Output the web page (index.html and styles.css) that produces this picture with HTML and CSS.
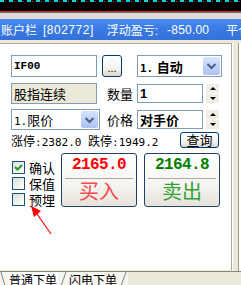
FILE: index.html
```html
<!DOCTYPE html>
<html lang="zh-CN">

<head>
    <meta charset="UTF-8">
    <meta name="viewport" content="width=device-width, initial-scale=1.0">
    <title>下单面板</title>
    <link rel="stylesheet" href="styles.css">
</head>

<body>
    <div class="chart-strip"></div>
    <div class="split"></div>

    <div class="titlebar">
        <span class="tb-name">账户栏</span>
        <span class="tb-acct">[802772]</span>
        <span class="tb-label">浮动盈亏:</span>
        <span class="tb-val">-850.00</span>
        <span class="tb-more">平仓盈亏:</span>
    </div>

    <div class="frame">
        <div class="panel">
            <div class="row row-1">
                <div class="edit code-edit">IF00</div>
                <button class="xp-btn dots-btn">...</button>
                <div class="combo mode-combo">
                    <span class="combo-val bold"><span class="mono">1.</span> 自动</span>
                    <span class="drop">
                        <svg width="17" height="18" viewBox="0 0 17 18"><path d="M4.5 7 L8.5 11 L12.5 7" fill="none" stroke="#4d6185" stroke-width="2"/></svg>
                    </span>
                </div>
            </div>

            <div class="row row-2">
                <div class="edit readonly">股指连续</div>
                <span class="lbl">数量</span>
                <div class="edit small-edit bold">1</div>
                <div class="spin"><span class="spin-up"></span><span class="spin-down"></span></div>
            </div>

            <div class="row row-3">
                <div class="combo type-combo">
                    <span class="combo-val"><span class="mono">1.</span>限价</span>
                    <span class="drop">
                        <svg width="17" height="18" viewBox="0 0 17 18"><path d="M4.5 7 L8.5 11 L12.5 7" fill="none" stroke="#4d6185" stroke-width="2"/></svg>
                    </span>
                </div>
                <span class="lbl">价格</span>
                <div class="edit small-edit bold">对手价</div>
                <div class="spin"><span class="spin-up"></span><span class="spin-down"></span></div>
            </div>

            <div class="row row-4">
                <span class="limits">涨停<span class="mono">:2382.0 </span>跌停<span class="mono">:1949.2</span></span>
                <button class="xp-btn query-btn">查询</button>
            </div>

            <div class="row row-5">
                <div class="checks">
                    <label class="chk">
                        <span class="box">
                            <svg width="11" height="11" viewBox="0 0 11 11"><path d="M2 5 L4.5 7.5 L9 3" fill="none" stroke="#21a121" stroke-width="2"/></svg>
                        </span>确认
                    </label>
                    <label class="chk"><span class="box"></span>保值</label>
                    <label class="chk"><span class="box"></span>预埋</label>
                </div>
                <button class="trade buy">
                    <span class="price">2165.0</span>
                    <span class="act">买入</span>
                </button>
                <button class="trade sell">
                    <span class="price">2164.8</span>
                    <span class="act">卖出</span>
                </button>
            </div>

            <!-- red annotation arrow drawn over the panel -->
            <svg class="arrow" width="232" height="227" viewBox="0 0 232 227">
                <line x1="51" y1="190" x2="37" y2="170" stroke="#ff0000" stroke-width="1.2"/>
                <polygon points="31,162 41,167 34,173" fill="#ff0000"/>
            </svg>
        </div>
        <div class="side"></div>
    </div>

    <div class="tabs">
        <div class="tab-set">
            <svg class="slash" width="8" height="14" viewBox="0 0 8 14"><line x1="1" y1="0" x2="5" y2="14" stroke="#808080"/></svg>
            <span class="tab active">普通下单</span>
            <svg class="slash" width="10" height="14" viewBox="0 0 10 14"><line x1="8" y1="0" x2="3" y2="14" stroke="#808080"/></svg>
            <span class="tab">闪电下单</span>
            <svg class="slash" width="10" height="14" viewBox="0 0 10 14"><line x1="8" y1="0" x2="3" y2="14" stroke="#808080"/></svg>
        </div>
    </div>
</body>

</html>
```

FILE: styles.css
```css
body {
    margin: 0;
    width: 241px;
    height: 285px;
    overflow: hidden;
    background: #ece9d8;
    font-family: "Liberation Sans", "Noto Sans CJK SC", sans-serif;
    font-size: 13px;
    color: #000;
}

.mono {
    font-family: "DejaVu Sans Mono", monospace;
}

.bold {
    font-weight: bold;
}

/* top of the chart window above */
.chart-strip {
    height: 11px;
    background-color: #000;
    background-image:
        repeating-linear-gradient(90deg, transparent 0 5px, #ff2020 5px 6px, transparent 6px 9px),
        repeating-linear-gradient(90deg, #00d8e0 0 4px, transparent 4px 9px);
    background-size: 100% 1px, 100% 2px;
    background-position: 0 1px, 0 0;
    background-repeat: no-repeat;
}

.split {
    height: 7px;
    border-top: 1px solid #e8141c;
    background: #dcdad2;
    box-shadow: inset 0 1px 0 #6f6f6f;
}

.titlebar {
    display: flex;
    align-items: center;
    height: 21px;
    padding-left: 1px;
    background: linear-gradient(#4a8cf0, #3a7be4 45%, #3471da);
    color: #fff;
    font-size: 12px;
    white-space: nowrap;
    overflow: hidden;
}

.titlebar span {
    flex-shrink: 0;
}

.tb-acct {
    margin-left: 6px;
    letter-spacing: 0.5px;
}

.tb-label {
    margin-left: 13px;
}

.tb-val {
    margin-left: 9px;
    letter-spacing: 0.2px;
}

.tb-more {
    margin-left: 17px;
}

/* main panel */
.frame {
    display: flex;
    height: 228px;
    padding-top: 3px;
}

.panel {
    position: relative;
    width: 232px;
    height: 227px;
    padding: 11px 12px 0 11px;
    box-sizing: border-box;
    background: #fff;
    border-top: 1px solid #aca899;
    border-right: 1px solid #aca899;
}

.side {
    flex: 1;
    box-shadow: inset 1px 0 0 #fff, inset -2px 0 0 #fff, inset -3px 0 0 #9d9a8c;
}

.row {
    display: flex;
    align-items: center;
}

.row > * {
    flex-shrink: 0;
}

.row-1 {
    height: 22px;
}

.row-2 {
    height: 21px;
    margin-top: 6px;
}

.row-3 {
    height: 21px;
    margin-top: 5px;
}

.row-4 {
    height: 16px;
    margin-top: 2px;
}

.row-5 {
    align-items: flex-start;
    height: 54px;
    margin-top: 5px;
}

.edit {
    display: flex;
    align-items: center;
    box-sizing: border-box;
    height: 22px;
    padding-left: 2px;
    border: 1px solid #7f9db9;
    background: #fff;
    white-space: nowrap;
}

.code-edit {
    width: 86px;
    font-family: "Liberation Mono", monospace;
    font-weight: bold;
    font-size: 11px;
}

.readonly {
    width: 86px;
    height: 21px;
    background: #ece9d8;
}

.small-edit {
    width: 66px;
    height: 19px;
}

.lbl {
    width: 30px;
    margin-left: 10px;
}

.row-3 .lbl {
    margin-left: 7px;
}

.xp-btn {
    box-sizing: border-box;
    margin: 0;
    padding: 0;
    border: 1px solid #003c74;
    border-radius: 3px;
    background: linear-gradient(#ffffff, #f4f3ee 60%, #dcd8cc);
    font-family: inherit;
    color: #000;
}

.dots-btn {
    width: 20px;
    height: 22px;
    margin-left: 5px;
    font-size: 11px;
    line-height: 24px;
}

.combo {
    display: flex;
    align-items: center;
    box-sizing: border-box;
    height: 22px;
    border: 1px solid #7f9db9;
    background: #fff;
}

.mode-combo {
    width: 85px;
    margin-left: 15px;
}

.type-combo {
    width: 89px;
    height: 21px;
}

.combo-val {
    flex: 1;
    padding-left: 2px;
    white-space: nowrap;
}

.combo-val .mono {
    font-size: 11px;
}

.drop {
    display: flex;
    width: 17px;
    height: 18px;
    margin-right: 1px;
    border-radius: 2px;
    background: linear-gradient(#d8e4fc, #bccffa 60%, #adc2f3);
}

.type-combo .drop {
    height: 17px;
}

.spin {
    display: flex;
    flex-direction: column;
    gap: 1px;
    margin-left: 3px;
}

.spin span {
    position: relative;
    width: 13px;
    height: 9px;
    background: #efede4;
}

.spin-up::after,
.spin-down::after {
    content: "";
    position: absolute;
    left: 4px;
    border-left: 3px solid transparent;
    border-right: 3px solid transparent;
}

.spin-up::after {
    top: 3px;
    border-bottom: 3px solid #000;
}

.spin-down::after {
    top: 3px;
    border-top: 3px solid #000;
}

.limits {
    font-size: 12px;
    white-space: nowrap;
}

.limits .mono {
    font-size: 11px;
}

.query-btn {
    width: 39px;
    height: 16px;
    margin-left: auto;
    font-size: 13px;
    line-height: 13px;
}

/* check boxes */
.checks {
    display: flex;
    flex-direction: column;
    width: 50px;
    padding-top: 6px;
}

.chk {
    display: flex;
    align-items: center;
    height: 16px;
    padding-left: 1px;
}

.box {
    display: flex;
    align-items: center;
    justify-content: center;
    box-sizing: border-box;
    width: 13px;
    height: 13px;
    margin-right: 4px;
    border: 1px solid #1c5180;
    background: linear-gradient(135deg, #dcdcd7, #fff);
}

/* buy / sell buttons */
.trade {
    display: flex;
    flex-direction: column;
    box-sizing: border-box;
    width: 76px;
    height: 54px;
    margin: 0;
    padding: 0;
    border: 1px solid #1f3f6e;
    border-radius: 3px;
    background: linear-gradient(#ffffff, #f5f4f0 60%, #e6e3da);
    font-family: inherit;
}

.sell {
    margin-left: 7px;
}

.price {
    display: block;
    height: 24px;
    margin: 0 3px;
    border-bottom: 1px solid #a8a8a8;
    font-family: "Liberation Mono", monospace;
    font-weight: bold;
    font-size: 16px;
    letter-spacing: -0.6px;
    line-height: 23px;
    text-align: center;
}

.act {
    display: block;
    width: 100%;
    height: 26px;
    font-size: 20px;
    line-height: 26px;
    text-align: center;
}

.buy .price {
    color: #ff0000;
}

.buy .act {
    color: #f24a4a;
}

.sell .price {
    color: #008000;
}

.sell .act {
    color: #35a035;
}

.arrow {
    position: absolute;
    left: 0;
    top: 0;
    pointer-events: none;
}

/* bottom sheet tabs */
.tabs {
    height: 14px;
    border-top: 1px solid #8a8778;
}

.tab-set {
    display: inline-flex;
    align-items: flex-start;
    height: 14px;
    background: #f6f5f0;
}

.tab {
    padding: 3px 1px 0 1px;
    font-size: 12px;
    line-height: 12px;
}

.tab.active {
    background: #fff;
}
```
